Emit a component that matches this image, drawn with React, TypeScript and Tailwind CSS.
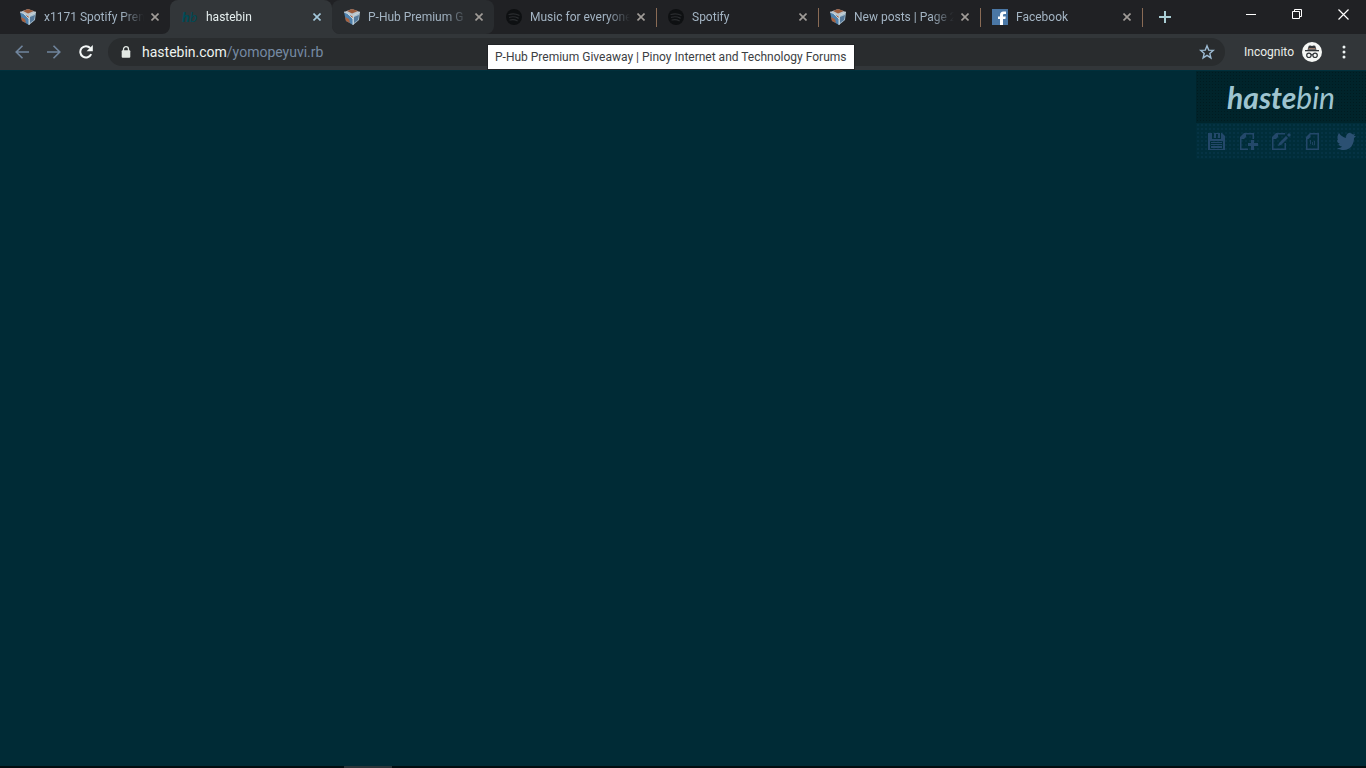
import type { ReactNode } from 'react';
import clsx from 'clsx';

type Favicon = 'cube' | 'hastebin' | 'spotify' | 'facebook';

interface Tab {
  title: string;
  icon: Favicon;
  state?: 'active' | 'hover';
  separator?: boolean;
}

const TABS: Tab[] = [
  { title: 'x1171 Spotify Pren', icon: 'cube' },
  { title: 'hastebin', icon: 'hastebin', state: 'active' },
  { title: 'P-Hub Premium G', icon: 'cube', state: 'hover' },
  { title: 'Music for everyone', icon: 'spotify', separator: true },
  { title: 'Spotify', icon: 'spotify', separator: true },
  { title: 'New posts | Page 2', icon: 'cube', separator: true },
  { title: 'Facebook', icon: 'facebook', separator: true },
];

function TabIcon({ icon }: { icon: Favicon }) {
  if (icon === 'hastebin') {
    return (
      <span aria-hidden="true" className="w-4 shrink-0 font-[Lato,sans-serif] text-sm leading-4 italic text-[#004a56]">
        <b className="font-black">h</b>b
      </span>
    );
  }
  if (icon === 'cube') {
    return (
      <svg className="size-4 shrink-0" viewBox="0 0 16 16" aria-hidden="true">
        <path d="M0 3 8 0l8 3-7 4z" fill="#b9c4cc" />
        <path d="m3 2 5-2 6 2-6 2.500z" fill="#9a5b3c" />
        <path d="M0 3l9 4v9l-7-4z" fill="#4f81ad" />
        <path d="m16 3-7 4v9l6-5z" fill="#a9bfcd" />
        <path d="m10 8 5-2-1 5-4 3z" fill="#56799a" />
        <path d="m1 8 4 2 1 4-4-2zM6 6l3 1v2L7 8z" fill="#a8623f" />
        <path d="m0 3 9 4v9M4 5l5 5M16 3 9 7" fill="none" stroke="#dde6ea" strokeWidth=".8" />
      </svg>
    );
  }
  if (icon === 'spotify') {
    return (
      <svg className="size-4 shrink-0" viewBox="0 0 16 16" fill="none" aria-hidden="true">
        <circle cx="8" cy="8" r="8" fill="#0e1012" />
        <path d="M3 5.500c3.500-1.200 7-.8 10 .8M3.500 8.300c3-1 6-.6 8.700.8M4 11c2.500-.8 5-.5 7.200.8" stroke="#2b2d30" strokeWidth="1.200" strokeLinecap="round" />
      </svg>
    );
  }
  return (
    <svg className="size-4 shrink-0" viewBox="0 0 16 16" aria-hidden="true">
      <path d="M0 0h16v16H0z" fill="#4a77a5" />
      <path d="M8 16v-6H6V7.500h2V6c0-2.300 1.300-3.500 3.400-3.500H14V5h-1.500c-1 0-1.500.4-1.500 1.300v1.200h2.800L13.400 10H11v6z" fill="#fff" />
    </svg>
  );
}

function TabItem({ tab }: { tab: Tab }) {
  const active = tab.state === 'active';
  return (
    <div
      className={clsx(
        'relative flex h-[34px] w-[162px] min-w-0 items-center pr-[7px] pl-3',
        active && 'z-10 rounded-t-lg bg-[#323639]',
        tab.state === 'hover' && 'rounded-lg bg-[#292c2f]',
      )}
    >
      {active && (
        <>
          <svg className="absolute bottom-0 -left-2 size-2" viewBox="0 0 8 8" aria-hidden="true">
            <path d="M8 0v8H0a8 8 0 0 0 8-8z" fill="#323639" />
          </svg>
          <svg className="absolute -right-2 bottom-0 size-2" viewBox="0 0 8 8" aria-hidden="true">
            <path d="M0 0v8h8a8 8 0 0 1-8-8z" fill="#323639" />
          </svg>
        </>
      )}
      <button type="button" role="tab" aria-selected={active} className="flex min-w-0 flex-1 items-center gap-2 text-left">
        <TabIcon icon={tab.icon} />
        <span
          className={clsx(
            'min-w-0 flex-1 overflow-hidden whitespace-nowrap [mask-image:linear-gradient(to_right,black_75%,transparent_97%)]',
            active ? 'text-[#e6efef]' : 'text-[#a3b4c3]',
          )}
        >
          {tab.title}
        </span>
      </button>
      <button
        type="button"
        aria-label={`Close ${tab.title}`}
        className={clsx('flex size-4 shrink-0 items-center justify-center', active ? 'text-[#a5c9dc]' : 'text-[#a09c98]')}
      >
        <svg className="size-2" viewBox="0 0 8 8" aria-hidden="true">
          <path d="m0.500 0.500 7 7m0-7-7 7" stroke="currentColor" strokeWidth="1.600" />
        </svg>
      </button>
      {tab.separator && <span className="absolute right-0 h-[19px] w-px translate-x-px bg-[#8a6b55]" />}
    </div>
  );
}

function ToolButton({ label, className, children }: { label: string; className?: string; children: ReactNode }) {
  return (
    <button type="button" aria-label={label} className={clsx('flex h-7 w-8 shrink-0 items-center justify-center', className)}>
      {children}
    </button>
  );
}

function WindowControls() {
  return (
    <div className="ml-auto flex h-7 text-white">
      <button type="button" aria-label="Minimize" className="flex w-[46px] items-center justify-center">
        <svg width="10" height="10" viewBox="0 0 10 10" aria-hidden="true">
          <path d="M0 5h10v1H0z" fill="currentColor" />
        </svg>
      </button>
      <button type="button" aria-label="Restore" className="flex w-[46px] items-center justify-center">
        <svg width="10" height="10" viewBox="0 0 10 10" fill="none" stroke="currentColor" aria-hidden="true">
          <path d="M.5 2.500h7v7h-7zM2.500 2.500v-2h7v7h-2" />
        </svg>
      </button>
      <button type="button" aria-label="Close window" className="flex w-[46px] items-center justify-center">
        <svg width="11" height="11" viewBox="0 0 11 11" stroke="currentColor" strokeWidth="1.200" aria-hidden="true">
          <path d="m.5.5 10 10m0-10-10 10" />
        </svg>
      </button>
    </div>
  );
}

function Toolbar() {
  return (
    <div className="flex h-9 items-center bg-[#323639] pr-3 pl-[6px]">
      <ToolButton label="Back" className="text-[#70859d]">
        <svg width="14" height="14" viewBox="0 0 14 14" fill="none" stroke="currentColor" strokeWidth="1.600" aria-hidden="true">
          <path d="M14 7H1M7.500.7 1.200 7l6.300 6.300" />
        </svg>
      </ToolButton>
      <ToolButton label="Forward" className="text-[#70859d]">
        <svg width="14" height="14" viewBox="0 0 14 14" fill="none" stroke="currentColor" strokeWidth="1.600" aria-hidden="true">
          <path d="M0 7h13M6.500.7 12.800 7l-6.300 6.300" />
        </svg>
      </ToolButton>
      <ToolButton label="Reload" className="text-[#f4f8f8]">
        <svg width="14" height="14" viewBox="0 0 14 14" fill="none" aria-hidden="true">
          <path d="M12.200 9.200A5.700 5.700 0 1 1 11.200 3" stroke="currentColor" strokeWidth="2" />
          <path d="M13.800 0v6.200H7.600z" fill="currentColor" />
        </svg>
      </ToolButton>
      <div className="ml-[6px] flex h-7 min-w-0 flex-1 items-center rounded-full bg-[#292c2e] pr-[10px] pl-[13px]">
        <svg className="shrink-0" width="10" height="12" viewBox="0 0 10 12" aria-hidden="true">
          <path d="M2.500 5V3.200a2.500 2.500 0 0 1 5 0V5" fill="none" stroke="#e2e8e4" strokeWidth="1.300" />
          <rect x=".7" y="4.300" width="8.600" height="7.400" rx="1" fill="#e2e8e4" />
        </svg>
        <a href="https://hastebin.com/yomopeyuvi.rb" className="ml-[11px] text-sm text-[#eef3f0]">
          hastebin.com<span className="text-[#7589a3]">/yomopeyuvi.rb</span>
        </a>
        <button type="button" aria-label="Bookmark this tab" className="ml-auto flex size-4 items-center justify-center">
          <svg width="16" height="16" viewBox="0 0 16 16" fill="none" stroke="#9dbbd3" strokeWidth="1.400" aria-hidden="true">
            <path d="m8 1.800 1.700 4.300 4.600.3-3.500 3 1.100 4.500L8 11.400l-3.900 2.500 1.100-4.500-3.500-3 4.600-.3z" />
          </svg>
        </button>
      </div>
      <div className="ml-[19px] flex items-center gap-2 text-[#eaeeea]">
        <span>Incognito</span>
        <svg width="20" height="20" viewBox="0 0 20 20" aria-hidden="true">
          <circle cx="10" cy="10" r="10" fill="#f5f7f5" />
          <path d="m5.500 7.700 1.300-4 1.500-.3 1.700.5 1.700-.5 1.500.3 1.300 4z" fill="#303438" />
          <path d="M3 8h14v1.300H3z" fill="#303438" />
          <path d="M6.500 6.600h7" stroke="#a57e6b" />
          <g fill="none" stroke="#303438" strokeWidth="1.200">
            <circle cx="6.900" cy="13.300" r="2.200" />
            <circle cx="13.100" cy="13.300" r="2.200" />
            <path d="M9 13c.6-.5 1.400-.5 2 0" />
          </g>
        </svg>
      </div>
      <button type="button" aria-label="Menu" className="ml-3 flex w-5 items-center justify-center">
        <svg width="4" height="14" viewBox="0 0 4 14" fill="#edf3f3" aria-hidden="true">
          <circle cx="2" cy="2" r="1.500" />
          <circle cx="2" cy="7" r="1.500" />
          <circle cx="2" cy="12" r="1.500" />
        </svg>
      </button>
    </div>
  );
}

const ACTIONS: { label: string; drawing: ReactNode }[] = [
  {
    label: 'Save',
    drawing: <path fillRule="evenodd" d="M2 1h4v6h9V1h1l3 3v14H2zM8 1h6v5h-2V2h-2v4H8zM4 9v8h13V9zM5 10h11v1H5zm0 2h11v1H5zm0 2h11v2H5z" />,
  },
  {
    label: 'New',
    drawing: (
      <>
        <path fillRule="evenodd" d="M5 1h10v6h-1.500V2.500H7V5L5 7H2.500v9.500H9V18H1V5z" />
        <path d="M12 8h3v3h4v3h-4v4h-3v-4H9v-3h3z" />
      </>
    ),
  },
  {
    label: 'Duplicate & Edit',
    drawing: (
      <>
        <path d="M5 1h9v1.500H7V5L5 7H2.500v9.500h11V11H15v7H1V5z" />
        <path d="m18 1 2 2-2 2-2-2zM15 4l2 2-7 7-3 1 1-3z" />
      </>
    ),
  },
  {
    label: 'Just Text',
    drawing: (
      <>
        <path fillRule="evenodd" d="M6 1h9v17H2V5zM6.500 2.500V5l-2 2h-1v9.500h10v-14z" />
        <path d="M6 8h1v4H6zm2 2h1v3H8zm2-1h1v4h-1z" opacity=".8" />
      </>
    ),
  },
  {
    label: 'Twitter',
    drawing: (
      <path
        fill="#2b5072"
        d="M3 1c2 3 4 4 7 5 0-3 1-5 4-5 1 0 2 .5 3 1.500L19 2l-1 2h2l-2 2c0 7-4 12-10 12-3 0-5-.6-7-2 3 0 4-.5 5-1.500-2 0-3-1-3.500-2.500H4C2 11 1 10 1 8l1 .5C1 6 1.500 3 3 1z"
      />
    ),
  },
];

function HastebinBox() {
  return (
    <div className="w-[170px] shrink-0 self-start">
      <h1 className="h-[52px] bg-[#00242b] bg-[radial-gradient(#001b20_1px,transparent_1px)] bg-size-[3px_3px] text-center font-[Lato,sans-serif] text-3xl leading-[52px] font-normal italic text-[#9fc4d0]">
        <a href="#about">
          <b className="font-bold">haste</b>bin
        </a>
      </h1>
      <div className="flex h-9 items-center justify-between bg-[#002d39] bg-[radial-gradient(#053344_1px,transparent_1px)] bg-size-[4px_4px] px-[10px] text-[#23486a]">
        {ACTIONS.map((action) => (
          <button key={action.label} type="button" aria-label={action.label}>
            <svg width="20" height="19" viewBox="0 0 20 19" fill="currentColor" aria-hidden="true">
              {action.drawing}
            </svg>
          </button>
        ))}
      </div>
    </div>
  );
}

export default function App() {
  return (
    <div className="flex min-h-screen flex-col bg-[#002b36] font-[Roboto,'Open_Sans',sans-serif] text-xs">
      <header className="relative">
        <div className="flex h-[34px] bg-[#202124] pl-2">
          <div role="tablist" className="flex min-w-0">
            {TABS.map((tab, i) => (
              <TabItem key={i} tab={tab} />
            ))}
          </div>
          <button type="button" aria-label="New tab" className="ml-2 flex w-[30px] shrink-0 items-center justify-center text-[#a9cdd4]">
            <svg width="12" height="12" viewBox="0 0 12 12" aria-hidden="true">
              <path d="M5 0h2v5h5v2H7v5H5V7H0V5h5z" fill="currentColor" />
            </svg>
          </button>
          <WindowControls />
        </div>
        <Toolbar />
        <div
          role="tooltip"
          className="absolute top-11 left-[487px] z-20 border border-[#202326] bg-white px-[7px] py-[3px] leading-[18px] whitespace-nowrap text-[#3c4043]"
        >
          P-Hub Premium Giveaway | Pinoy Internet and Technology Forums
        </div>
      </header>
      <main className="flex flex-1 justify-end border-t border-[#00303c]">
        <HastebinBox />
      </main>
      <footer className="h-[2px] bg-[#020d10] pl-[344px]">
        <div className="h-full w-12 bg-[#2b3438]" />
      </footer>
    </div>
  );
}
